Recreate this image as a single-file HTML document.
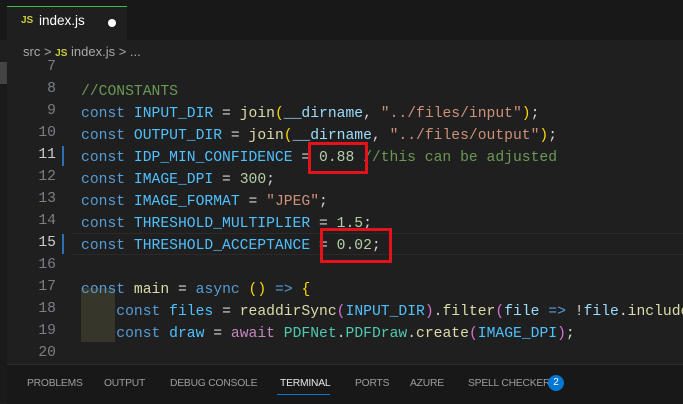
<html><head><style>
body{margin:0;width:683px;height:403px;background:#1f1f1f;overflow:hidden;position:relative;font-family:"Liberation Sans",sans-serif}
.a{position:absolute}
.code{font-family:"Liberation Mono",monospace;font-size:14.7px;white-space:pre;color:#d4d4d4}
.ln{position:absolute;left:20px;width:36px;text-align:right;color:#7a7f86;font-family:"Liberation Mono",monospace;font-size:14.7px}
.k{color:#569cd6}.c{color:#4fc1ff}.f{color:#dcdcaa}.s{color:#ce9178}.n{color:#b5cea8}.m{color:#6a9955}.y{color:#ffd700}.p{color:#da70d6}.q{color:#c586c0}.v{color:#9cdcfe}.g{color:#4ec9b0}
.pt{position:absolute;top:378px;font-size:10.3px;color:#9d9d9d;letter-spacing:-0.2px}
</style></head><body>
<div class="a" style="left:0;top:0;width:683px;height:40px;background:#181818"></div>
<div class="a" style="left:7px;top:6px;width:120px;height:34px;background:#1f1f1f;border-top:1px solid #3fb950"></div>
<div class="a" style="left:21px;top:15px;font-size:10px;font-weight:bold;color:#cbcb41">JS</div>
<div class="a" style="left:39px;top:13px;font-size:13.5px;color:#fff">index.js</div>
<div class="a" style="left:108px;top:19px;width:8px;height:8px;border-radius:50%;background:#fff"></div>
<div class="a" style="left:23px;top:44px;font-size:13px;color:#a9a9a9">src &gt; <span style="color:#cbcb41;font-size:10px;font-weight:bold">JS</span> index.js &gt; ...</div>
<div class="a" style="left:0;top:62px;width:7px;height:341px;background:#181818;opacity:.6"></div>
<div class="a" style="left:0;top:62px;width:7px;height:22px;background:#444"></div>
<div class="a" style="left:81px;top:288px;width:34px;height:54px;background:#36362a"></div>
<div class="a" style="left:62px;top:146px;width:2px;height:20px;background:#2b6fb5"></div>
<div class="a" style="left:62px;top:234px;width:2px;height:20px;background:#2b6fb5"></div>
<div class="a" style="left:72px;top:233px;width:611px;height:20px;border-top:1px solid #2a2a2a;border-bottom:1px solid #2a2a2a"></div>
<div class="ln" style="top:59px">7</div>
<div class="ln" style="top:81px">8</div>
<div class="ln" style="top:103px">9</div>
<div class="ln" style="top:125px">10</div>
<div class="ln" style="top:147px;color:#ccc">11</div>
<div class="ln" style="top:169px">12</div>
<div class="ln" style="top:191px">13</div>
<div class="ln" style="top:213px">14</div>
<div class="ln" style="top:235px;color:#ccc">15</div>
<div class="ln" style="top:257px">16</div>
<div class="ln" style="top:279px">17</div>
<div class="ln" style="top:301px">18</div>
<div class="ln" style="top:323px">19</div>
<div class="ln" style="top:345px">20</div>
<div class="a code" style="left:81px;top:59px;line-height:22px"> 
<span class="m">//CONSTANTS</span>
<span class="k">const</span> <span class="c">INPUT_DIR</span> = <span class="f">join</span><span class="y">(</span><span class="v">__dirname</span>, <span class="s">"../files/input"</span><span class="y">)</span>;
<span class="k">const</span> <span class="c">OUTPUT_DIR</span> = <span class="f">join</span><span class="y">(</span><span class="v">__dirname</span>, <span class="s">"../files/output"</span><span class="y">)</span>;
<span class="k">const</span> <span class="c">IDP_MIN_CONFIDENCE</span> = <span class="n">0.88</span> <span class="m">//this can be adjusted</span>
<span class="k">const</span> <span class="c">IMAGE_DPI</span> = <span class="n">300</span>;
<span class="k">const</span> <span class="c">IMAGE_FORMAT</span> = <span class="s">"JPEG"</span>;
<span class="k">const</span> <span class="c">THRESHOLD_MULTIPLIER</span> = <span class="n">1.5</span>;
<span class="k">const</span> <span class="c">THRESHOLD_ACCEPTANCE</span> = <span class="n">0.02</span>;

<span class="k">const</span> <span class="f">main</span> = <span class="k">async</span> <span class="y">()</span> <span class="k">=&gt;</span> <span class="y">{</span>
    <span class="k">const</span> <span class="c">files</span> = <span class="f">readdirSync</span><span class="p">(</span><span class="c">INPUT_DIR</span><span class="p">)</span>.<span class="f">filter</span><span class="p">(</span><span class="v">file</span> <span class="k">=&gt;</span> !<span class="v">file</span>.<span class="f">includes</span>
    <span class="k">const</span> <span class="c">draw</span> = <span class="q">await</span> <span class="g">PDFNet</span>.<span class="g">PDFDraw</span>.<span class="f">create</span><span class="p">(</span><span class="c">IMAGE_DPI</span><span class="p">)</span>;
</div>
<div class="a" style="left:308px;top:142px;width:54px;height:26px;border:3px solid #e3121b"></div>
<div class="a" style="left:320px;top:228px;width:66px;height:29px;border:3px solid #e3121b"></div>
<div class="a" style="left:7px;top:364px;width:676px;height:39px;background:#181818;border-top:1px solid #2b2b2b"></div>
<div class="pt" style="left:27px">PROBLEMS</div>
<div class="pt" style="left:104px">OUTPUT</div>
<div class="pt" style="left:170px">DEBUG CONSOLE</div>
<div class="pt" style="left:280px;color:#e7e7e7">TERMINAL</div>
<div class="a" style="left:277px;top:394px;width:53px;height:1px;background:#0078d4"></div>
<div class="pt" style="left:355px">PORTS</div>
<div class="pt" style="left:410px">AZURE</div>
<div class="pt" style="left:468px">SPELL CHECKER</div>
<div class="a" style="left:548px;top:375px;width:16px;height:16px;border-radius:50%;background:#0078d4;color:#fff;font-size:10px;text-align:center;line-height:16px">2</div>
</body></html>
